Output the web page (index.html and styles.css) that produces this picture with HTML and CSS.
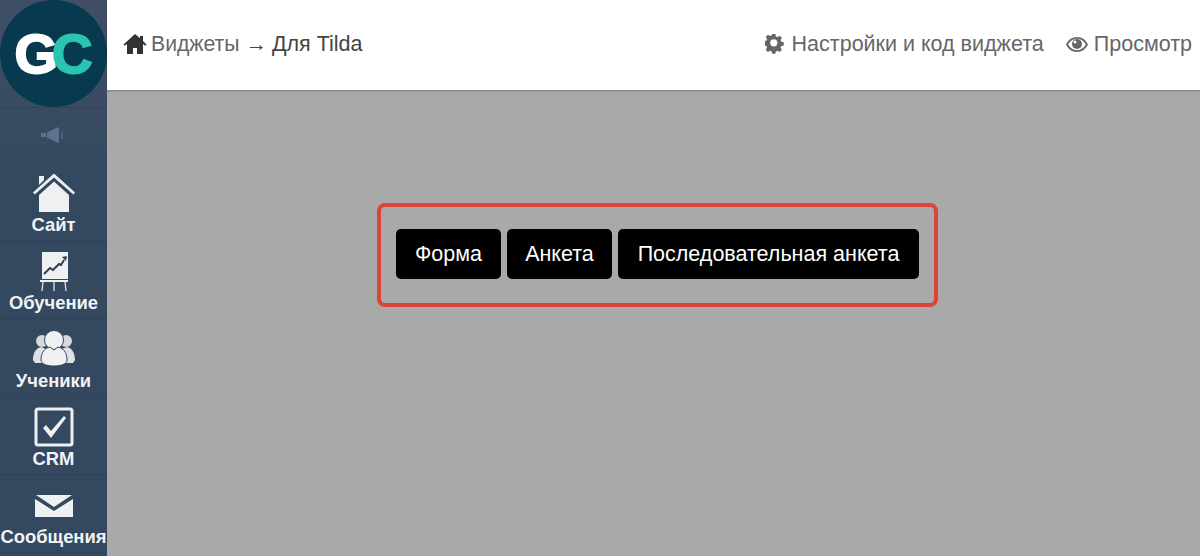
FILE: index.html
```html
<!DOCTYPE html>
<html lang="en">
<head>
    <meta charset="UTF-8">
    <title>Виджеты - Для Tilda</title>
    <link rel="stylesheet" href="styles.css">
</head>
<body>
    <div class="app">
        <!-- Left menu -->
        <nav class="sidebar">
            <div class="logo"><span class="logo-g">G</span><span class="logo-c">C</span></div>
            <div class="sound-row">
                <svg width="28" height="18" viewBox="0 0 28 18"><path d="M1 7h5v4H1zM7 6.500 17 1.500h2v15h-2L7 11.500z" fill="#5b7391"/><path d="M21 5h2v8h-2z" fill="#4a5f7b"/></svg>
            </div>
            <a class="menu-item">
                <svg width="42" height="40" viewBox="0 0 42 40"><path d="M6 3h5v4L6 12z" fill="#eef0f2"/><path d="M0 19.500 21 .5l21 19-1.700 2L21 4.500 1.700 21.500z" fill="#eef0f2"/><path d="M6 22 21 8.500 36 22v17H6z" fill="#eef0f2"/></svg>
                <span>Сайт</span>
            </a>
            <a class="menu-item">
                <svg width="30" height="40" viewBox="0 0 30 40"><path d="M3 1h26v27H3z" fill="#eef0f2"/><path d="M5 23l6-6 3 2 6-6 2 1 3-5" fill="none" stroke="#2e3f52" stroke-width="2"/><path d="M23 6l5-1-1 5z" fill="#2e3f52"/><path d="M1 29h28v2H1z" fill="#eef0f2"/><path d="M4 31 3 40M15 31v9M26 31l1 9" stroke="#dfe3e7" stroke-width="1.300"/></svg>
                <span>Обучение</span>
            </a>
            <a class="menu-item">
                <svg width="44" height="40" viewBox="0 0 44 40"><circle cx="10" cy="12" r="6" fill="#d5d8dc"/><circle cx="34" cy="12" r="6" fill="#d5d8dc"/><path d="M1 31c0-7 3-12 8-13l5 2-3 14H3zM43 31c0-7-3-12-8-13l-5 2 3 14h8z" fill="#dfe2e5"/><circle cx="22" cy="11" r="9.500" stroke="#34495f" fill="#f0f1f3"/><path d="M9 31c0-8 4-12 9-13l4 3 4-3c5 1 9 5 9 13 0 4-6 6-13 6S9 35 9 31z" stroke="#34495f" fill="#f0f1f3"/></svg>
                <span>Ученики</span>
            </a>
            <a class="menu-item">
                <svg width="40" height="40" viewBox="0 0 40 40"><rect x="2" y="2" width="36" height="36" rx="2" fill="none" stroke="#eef0f2" stroke-width="3"/><path d="M9 21l3-3 5 6L30 9l2 2-15 20z" fill="#eef0f2"/></svg>
                <span>CRM</span>
            </a>
            <a class="menu-item">
                <svg width="40" height="40" viewBox="0 0 40 40"><path d="M2 10h36L20 22z" fill="#eef0f2"/><path d="M1 14l19 12 19-12v18H1z" fill="#eef0f2"/></svg>
                <span>Сообщения</span>
            </a>
        </nav>

        <div class="page">
            <header class="topbar">
                <div class="crumbs">
                    <svg class="icon-home" width="24" height="22" viewBox="0 0 24 22"><path d="M12 1 .5 11.500l1.300 1.300L4 11V21h6v-6h4v6h6V11l2.200 1.800 1.300-1.300L20 8V3h-3v2.200z" fill="#333"/></svg>
                    <span class="crumb-text"><span class="crumb-link">Виджеты</span> <span class="crumb-arrow">→</span> Для Tilda</span>
                </div>
                <div class="actions">
                    <a class="action action-settings">
                        <svg width="20" height="20" viewBox="0 0 22 22"><path fill="#666" fill-rule="evenodd" d="M9 0h4l.6 3 2.200.9 2.600-1.700 2.800 2.800-1.700 2.600.9 2.200 3 .6v4l-3 .6-.9 2.200 1.700 2.600-2.800 2.800-2.600-1.700-2.200.9-.6 3H9l-.6-3-2.200-.9-2.600 1.700-2.800-2.800 1.700-2.600-.9-2.200-3-.6V9l3-.6.9-2.200-1.700-2.600 2.800-2.800 2.600 1.700 2.200-.9zM11 6.500a4.500 4.500 0 1 0 0 9 4.500 4.500 0 0 0 0-9z" transform="scale(.88)"/></svg>
                        <span>Настройки и код виджета</span>
                    </a>
                    <a class="action action-view">
                        <svg width="22" height="15" viewBox="0 0 22 15"><path fill="#666" fill-rule="evenodd" d="M11 0c5 0 9 3 11 7.500C20 12 16 15 11 15S2 12 0 7.500C2 3 6 0 11 0zM2.200 7.500C4 10.800 7.200 13.200 11 13.200s7-2.400 8.800-5.700C18 4.200 14.800 1.800 11 1.800S4 4.200 2.200 7.500z"/><circle cx="11" cy="7" r="5" fill="#666"/><circle cx="9" cy="5" r="1.500" fill="#fff"/></svg>
                        <span>Просмотр</span>
                    </a>
                </div>
            </header>

            <main class="content">
                <div class="widget-frame">
                    <button class="widget-btn">Форма</button>
                    <button class="widget-btn">Анкета</button>
                    <button class="widget-btn widget-btn-wide">Последовательная анкета</button>
                </div>
            </main>
        </div>
    </div>
</body>
</html>
```
FILE: styles.css
```css
html, body {
    margin: 0;
    padding: 0;
    height: 100%;
    overflow: hidden;
    font-family: 'Liberation Sans', Arial, sans-serif;
}

.app {
    display: flex;
    height: 556px;
}

/* Left menu */
.sidebar {
    width: 107px;
    flex-shrink: 0;
    background: linear-gradient(#414f66, #34495f 170px);
    overflow: hidden;
}

.logo {
    width: 107px;
    height: 107px;
    border-radius: 50%;
    background-color: #073a4f;
    display: flex;
    align-items: center;
    justify-content: center;
    font-size: 56px;
    font-weight: bold;
    letter-spacing: -6px;
    padding-right: 6px;
    box-sizing: border-box;
    -webkit-text-stroke: 2px;
}

.logo-g {
    color: #fff;
}

.logo-c {
    color: #2ac4b0;
}

.sound-row {
    height: 56px;
    border-top: 1px solid #33445a;
    border-bottom: 1px solid #33445a;
    box-sizing: border-box;
    display: flex;
    align-items: center;
    justify-content: center;
}

.menu-item {
    display: flex;
    flex-direction: column;
    align-items: center;
    height: 78px;
    box-sizing: border-box;
    padding-top: 10px;
    border-bottom: 1px solid #2f4257;
    color: #f2f3f5;
    font-size: 18.400px;
    font-weight: bold;
    line-height: 20px;
    white-space: nowrap;
}

.menu-item span {
    margin-top: 2px;
}

/* Top bar */
.page {
    flex: 1;
    display: flex;
    flex-direction: column;
    background-color: #a9a9a9;
}

.topbar {
    height: 90px;
    flex-shrink: 0;
    background-color: #fff;
    display: flex;
    justify-content: space-between;
    align-items: center;
    padding: 0 8px 2px 16px;
    box-sizing: border-box;
    box-shadow: 0 1px 2px rgba(0, 0, 0, 0.25);
    font-size: 21.500px;
}

.crumbs {
    display: flex;
    align-items: center;
}

.icon-home {
    margin-right: 4px;
}

.crumb-text {
    color: #444;
}

.crumb-link {
    color: #666;
    font-size: 21.200px;
}

.crumb-arrow {
    margin-right: -1px;
}

.actions {
    display: flex;
    align-items: center;
    gap: 22px;
    color: #666;
}

.action {
    display: flex;
    align-items: center;
}

.action-settings svg {
    margin-right: 7px;
}

.action-view svg {
    margin-right: 6px;
}

/* Widget buttons */
.content {
    flex: 1;
    padding: 113px 0 0 270px;
}

.widget-frame {
    display: flex;
    gap: 6px;
    width: 561px;
    height: 104px;
    box-sizing: border-box;
    padding: 22px 15px;
    border: 4px solid #dd4438;
    border-radius: 8px;
}

.widget-btn {
    width: 105px;
    height: 50px;
    padding: 0;
    background-color: #000;
    color: #fff;
    border: none;
    border-radius: 5px;
    font-family: inherit;
    font-size: 21.500px;
    white-space: nowrap;
    flex-shrink: 0;
}

.widget-btn-wide {
    width: 301px;
}
```
